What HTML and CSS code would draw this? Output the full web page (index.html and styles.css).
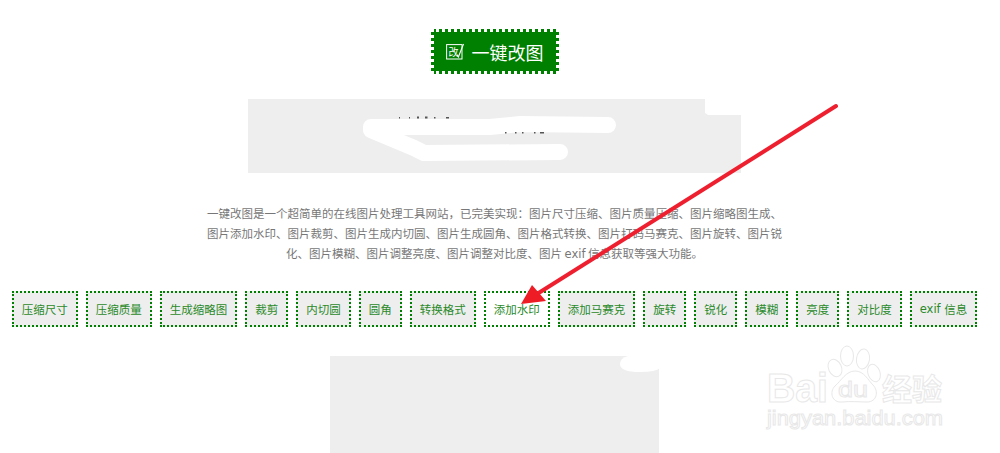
FILE: index.html
```html
<!DOCTYPE html>
<html lang="zh-CN">
<head>
<meta charset="utf-8">
<title>一键改图</title>
<link rel="stylesheet" href="styles.css">
</head>
<body>
<main class="page">
  <a class="cta" href="#">
    <svg class="cta-icon" viewBox="0 0 20 17" width="20" height="17" aria-hidden="true">
      <rect x="0.6" y="1.6" width="15.4" height="14.4" fill="none" stroke="#fff" stroke-width="1"/>
      <text x="2.4" y="12.5" class="cta-icon-text">改</text>
      <path d="M11 11.5 L12.4 14 L17.5 1" fill="none" stroke="#fff" stroke-width="1.1"/>
    </svg>
    <span>一键改图</span>
  </a>
  <div class="banner"></div>
  <p class="intro">一键改图是一个超简单的在线图片处理工具网站，已完美实现：图片尺寸压缩、图片质量压缩、图片缩略图生成、图片添加水印、图片裁剪、图片生成内切圆、图片生成圆角、图片格式转换、图片打码马赛克、图片旋转、图片锐化、图片模糊、图片调整亮度、图片调整对比度、图片 <span class="latin">exif</span> 信息获取等强大功能。</p>
  <nav class="tools">
    <a class="tool" href="#">压缩尺寸</a>
    <a class="tool" href="#">压缩质量</a>
    <a class="tool" href="#">生成缩略图</a>
    <a class="tool" href="#">裁剪</a>
    <a class="tool" href="#">内切圆</a>
    <a class="tool" href="#">圆角</a>
    <a class="tool" href="#">转换格式</a>
    <a class="tool tool-active" href="#">添加水印</a>
    <a class="tool" href="#">添加马赛克</a>
    <a class="tool" href="#">旋转</a>
    <a class="tool" href="#">锐化</a>
    <a class="tool" href="#">模糊</a>
    <a class="tool" href="#">亮度</a>
    <a class="tool" href="#">对比度</a>
    <a class="tool" href="#"><span class="latin">exif </span>信息</a>
  </nav>
  <div class="preview"></div>
</main>

<svg class="overlay" viewBox="0 0 1000 453" width="1000" height="453" aria-hidden="true">
  <!-- redaction scribbles on the banner -->
  <g fill="none" stroke="#fff" stroke-width="16" stroke-linecap="round" stroke-linejoin="round">
    <path d="M371 127 L490 127 L520 124 L608 125"/>
    <path d="M371 130 L414 148 L424 153 L560 152"/>
  </g>
  <path d="M705 99 H742 V115 H708 L705 113 Z" fill="#fff"/>
  <g fill="#555">
    <rect x="399" y="117" width="1" height="1.5"/><rect x="409" y="117" width="1" height="1.5"/>
    <rect x="417" y="116.5" width="2" height="2"/><rect x="425" y="116.5" width="2.5" height="2"/>
    <rect x="434" y="117" width="1.5" height="1.5"/><rect x="446" y="117" width="3" height="1.5"/>
    <rect x="505" y="132" width="1.5" height="1.5"/><rect x="515" y="132" width="1.5" height="1.5"/>
    <rect x="522" y="132" width="1.5" height="1.5"/><rect x="534" y="132" width="1.5" height="1.5"/>
    <rect x="540" y="132" width="4" height="1.5"/>
  </g>
  <path d="M628 356 H660 V368 Q656 372 640 372 Q620 372 620 364 Q620 358 628 356 Z" fill="#fff"/>

  <!-- watermark -->
  <g class="wm">
    <ellipse cx="835" cy="368" rx="6.5" ry="9" transform="rotate(-25 835 368)"/>
    <ellipse cx="847" cy="356" rx="6.5" ry="10"/>
    <ellipse cx="863" cy="359" rx="6.5" ry="10" transform="rotate(8 863 359)"/>
    <ellipse cx="874" cy="373" rx="6" ry="9" transform="rotate(-20 874 373)"/>
    <path d="M855 371 C864 371 868 380 873 385 C879 391 877 402 867 402 C860 402 850 401 842 402 C832 403 829 392 835 386 C841 381 846 371 855 371 Z"/>
    <text x="767" y="402" class="wm-bai" textLength="61" lengthAdjust="spacingAndGlyphs">Bai</text>
    <text x="838" y="397" class="wm-du" textLength="30" lengthAdjust="spacingAndGlyphs">du</text>
    <text x="882" y="400" class="wm-cn">经验</text>
    <text x="767" y="425" class="wm-url" textLength="176" lengthAdjust="spacingAndGlyphs">jingyan.baidu.com</text>
  </g>

  <!-- annotation arrow -->
  <path d="M836 106 L537 294" fill="none" stroke="#ee2030" stroke-width="4" stroke-linecap="round"/>
  <path d="M521 304 L532 285 L546 301 Z" fill="#ee1c25"/>
</svg>
</body>
</html>
```
FILE: styles.css
```css
html, body {
  margin: 0;
  padding: 0;
  height: 453px;
  overflow: hidden;
  background: #fff;
}

body {
  position: relative;
  font-family: "Noto Sans CJK SC", "Noto Sans", sans-serif;
}

.page {
  width: 989px;
  display: flex;
  flex-direction: column;
  align-items: center;
  padding-top: 29px;
}

.cta {
  box-sizing: border-box;
  width: 128px;
  height: 45px;
  display: flex;
  align-items: center;
  justify-content: center;
  gap: 6px;
  background: #008000;
  border: 3px dotted #fff;
  color: #fff;
  font-size: 18px;
  line-height: 1;
  text-decoration: none;
}

.cta-icon-text {
  font-size: 10px;
  fill: #fff;
}

.banner {
  width: 493px;
  height: 74px;
  margin-top: 25px;
  background: #eee;
}

.intro {
  width: 580px;
  height: 60px;
  margin: 30px 0 0;
  font-size: 11.5px;
  line-height: 20px;
  color: #777;
  text-align: center;
}

.latin {
  font-family: "DejaVu Sans", sans-serif;
  white-space: pre;
}

.tools {
  display: flex;
  gap: 8px;
  justify-content: center;
  margin-top: 28px;
}

.tool {
  box-sizing: border-box;
  height: 36px;
  padding: 0 8px;
  display: flex;
  align-items: center;
  background: #eee;
  border: 2px dotted #008000;
  color: #2a8a2a;
  font-size: 11.5px;
  white-space: nowrap;
  text-decoration: none;
}

.tool-active {
  background: #fff;
}

.preview {
  width: 329px;
  height: 97px;
  margin-top: 29px;
  background: #eee;
}

.overlay {
  position: absolute;
  left: 0;
  top: 0;
  pointer-events: none;
}

.wm {
  fill: #fff;
  stroke: #e8e8e8;
  stroke-width: 1;
}

.wm-bai {
  font-family: "Liberation Sans", sans-serif;
  font-weight: 700;
  font-size: 40px;
}

.wm-du {
  font-family: "Liberation Sans", sans-serif;
  font-size: 22px;
}

.wm-cn {
  font-family: "Noto Sans CJK SC", sans-serif;
  font-weight: 700;
  font-size: 30px;
}

.wm-url {
  font-family: "Liberation Sans", sans-serif;
  font-size: 21px;
}
```
